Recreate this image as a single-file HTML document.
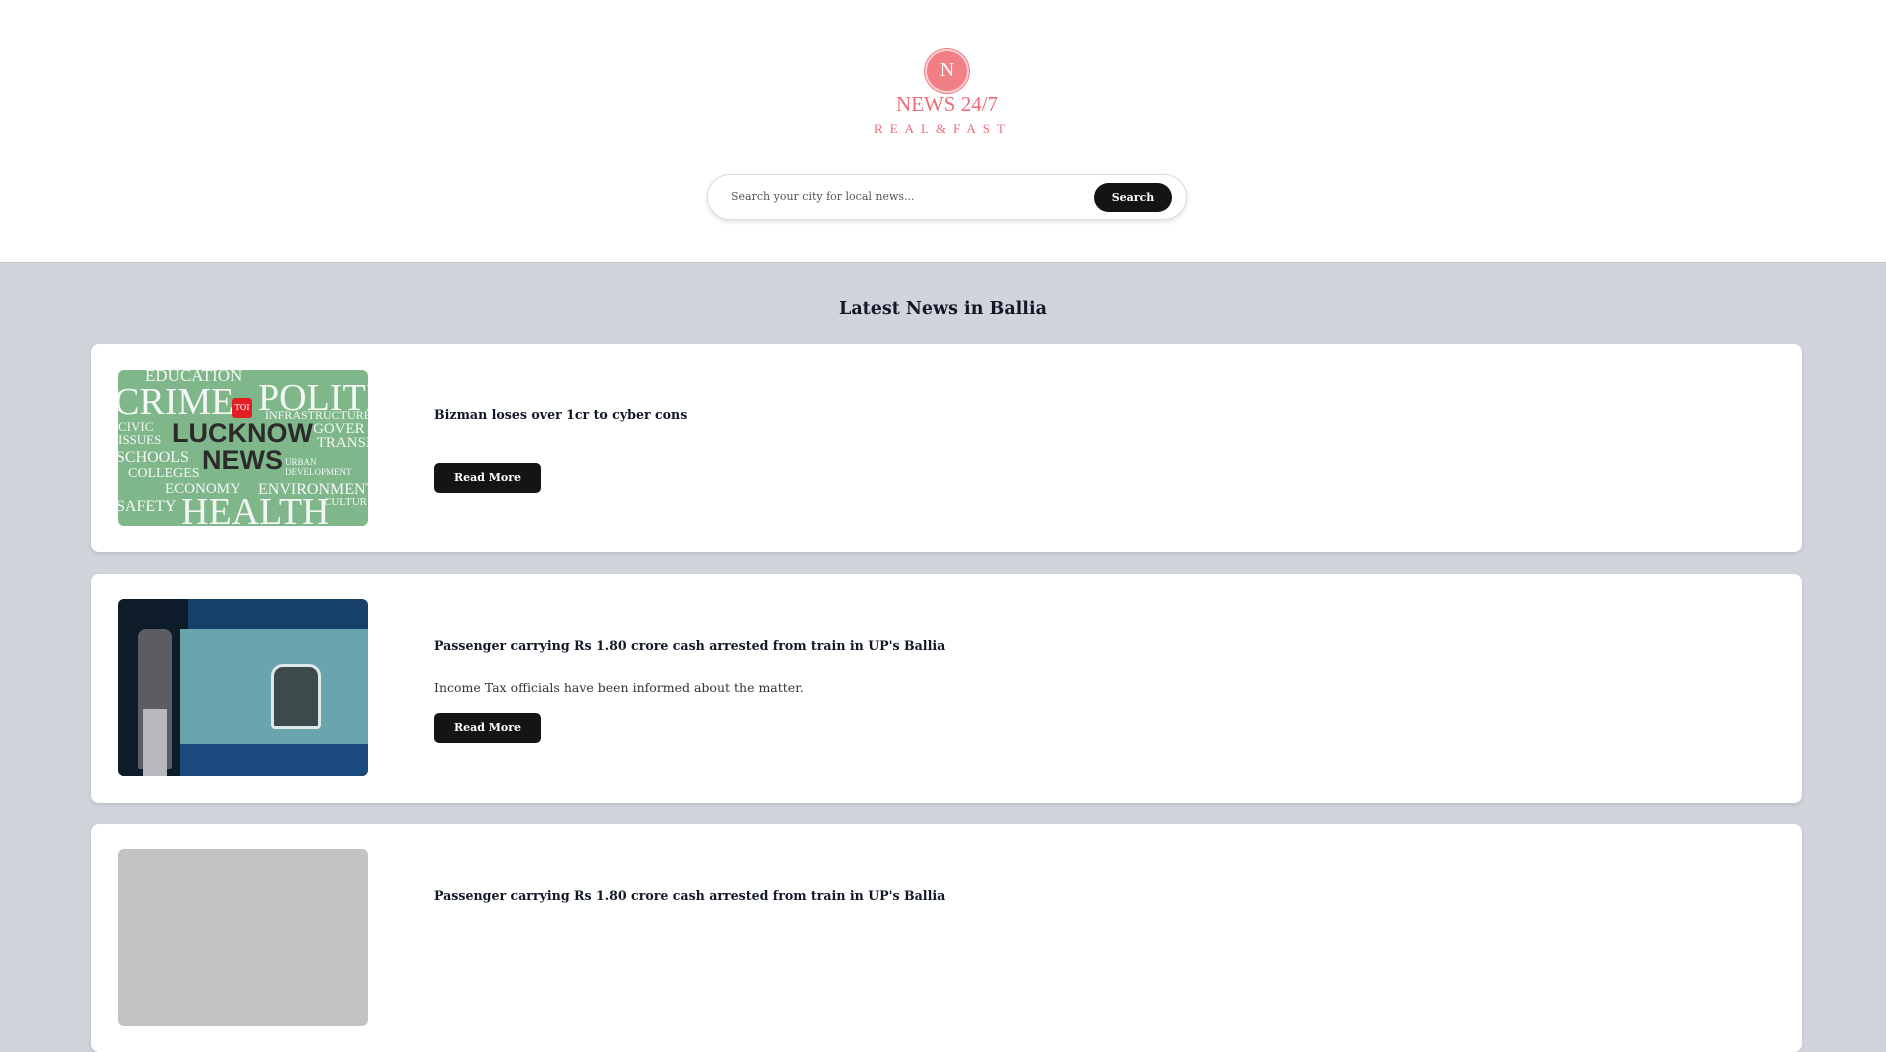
<!DOCTYPE html>
<html><head><meta charset="utf-8"><style>
*{box-sizing:border-box;margin:0;padding:0}
body{width:1886px;height:897px;overflow:hidden;background:#d1d5db;font-family:"DejaVu Serif","Liberation Serif",serif;color:#111827}
header{position:absolute;left:0;top:0;width:1886px;height:263px;background:#fff;border-bottom:1px solid #c4c8ce}
.logo{position:absolute;left:925px;top:49px;width:44px;height:44px;border-radius:50%;background:#f07f86;border:2px solid #fbd0d3;box-shadow:0 0 0 1px #f07f86}
.logo span{position:absolute;left:0;right:0;top:8px;text-align:center;color:#fff;font:20px "Liberation Serif",serif}
.t1{position:absolute;left:880px;width:134px;top:92px;text-align:center;color:#ef6a77;font:21px "Liberation Serif",serif}
.t2{position:absolute;left:860px;width:166px;top:121px;text-align:center;color:#ef6a77;font:13px "Liberation Serif",serif;letter-spacing:7px}
.search{position:absolute;left:707px;top:174px;width:480px;height:46px;border:1px solid #ddd;border-radius:23px;box-shadow:0 2px 5px rgba(0,0,0,.12);background:#fff}
.search .ph{position:absolute;left:23px;top:15px;font-size:11px;color:#555}
.search .btn{position:absolute;left:386px;top:8px;width:78px;height:29px;border-radius:15px;background:#141414;color:#fff;font-size:11px;font-weight:bold;text-align:center;line-height:29px}
h2{position:absolute;left:0;width:1886px;top:299px;text-align:center;font-size:17.5px;font-weight:bold}
.card{position:absolute;left:91px;width:1711px;background:#fff;border-radius:8px;box-shadow:0 2px 4px rgba(0,0,0,.1)}
.img{position:absolute;left:27px;width:250px;border-radius:6px;overflow:hidden}
.title{position:absolute;left:343px;font-size:12.6px;font-weight:bold;white-space:nowrap}
.desc{position:absolute;left:343px;font-size:12.5px;color:#333}
.rm{position:absolute;left:343px;width:107px;height:30px;border-radius:5px;background:#141414;color:#fff;font-size:11px;font-weight:bold;text-align:center;line-height:30px}
.w{position:absolute;color:#f4f8f4;font-family:"Liberation Serif",serif;white-space:nowrap}
.b{position:absolute;color:#2b2b2b;font-family:"Liberation Sans",sans-serif;font-weight:bold;white-space:nowrap}
</style></head><body>
<header>
<div class="logo"><span>N</span></div>
<div class="t1">NEWS 24/7</div>
<div class="t2">REAL&amp;FAST</div>
<div class="search"><div class="ph">Search your city for local news...</div><div class="btn">Search</div></div>
</header>
<h2>Latest News in Ballia</h2>

<div class="card" style="top:344px;height:208px">
 <div class="img" style="top:26px;height:156px;background:#7fb78b">
  <div class="w" style="left:27px;top:-4px;font-size:17px">EDUCATION</div>
  <div class="w" style="left:-4px;top:10px;font-size:38px">CRIME</div>
  <div class="w" style="left:140px;top:6px;font-size:38px">POLITIC</div>
  <div style="position:absolute;left:114px;top:28px;width:20px;height:20px;background:#e31e24;border-radius:3px;color:#fff;font-size:8px;text-align:center;line-height:20px">TOI</div>
  <div class="w" style="left:147px;top:38px;font-size:12px">INFRASTRUCTURE</div>
  <div class="w" style="left:0;top:50px;font-size:13px;line-height:13px">CIVIC<br>ISSUES</div>
  <div class="b" style="left:54px;top:48px;font-size:27px">LUCKNOW</div>
  <div class="w" style="left:195px;top:52px;font-size:15px;line-height:14px">GOVER<br>&nbsp;TRANSI</div>
  <div class="w" style="left:-2px;top:79px;font-size:16px">SCHOOLS</div>
  <div class="b" style="left:84px;top:75px;font-size:27px">NEWS</div>
  <div class="w" style="left:167px;top:87px;font-size:9px;line-height:10px">URBAN<br>DEVELOPMENT</div>
  <div class="w" style="left:10px;top:96px;font-size:14px">COLLEGES</div>
  <div class="w" style="left:47px;top:111px;font-size:15px">ECONOMY</div>
  <div class="w" style="left:140px;top:111px;font-size:16px">ENVIRONMENT</div>
  <div class="w" style="left:-2px;top:128px;font-size:16px">SAFETY</div>
  <div class="w" style="left:63px;top:120px;font-size:38px">HEALTH</div>
  <div class="w" style="left:206px;top:126px;font-size:11px">CULTUR</div>
 </div>
 <div class="title" style="top:63px">Bizman loses over 1cr to cyber cons</div>
 <div class="rm" style="top:119px">Read More</div>
</div>

<div class="card" style="top:574px;height:229px">
 <div class="img" style="top:25px;height:177px;background:#17406a">
  <div style="position:absolute;left:0;top:0;width:70px;height:177px;background:#0e1c2a"></div>
  <div style="position:absolute;left:62px;top:30px;width:188px;height:115px;background:#6aa4ad"></div>
  <div style="position:absolute;left:62px;top:145px;width:188px;height:32px;background:#1a4a7e"></div>
  <div style="position:absolute;left:153px;top:65px;width:50px;height:65px;border-radius:12px 12px 4px 4px;background:#3d4a4a;border:3px solid #dfe8e8"></div>
  <div style="position:absolute;left:20px;top:30px;width:34px;height:140px;background:#5b5d62;border-radius:8px 8px 2px 2px"></div>
  <div style="position:absolute;left:25px;top:110px;width:24px;height:67px;background:#b8b8bc"></div>
 </div>
 <div class="title" style="top:64px">Passenger carrying Rs 1.80 crore cash arrested from train in UP's Ballia</div>
 <div class="desc" style="top:106px">Income Tax officials have been informed about the matter.</div>
 <div class="rm" style="top:139px">Read More</div>
</div>

<div class="card" style="top:824px;height:228px">
 <div class="img" style="top:25px;height:177px;background:#c3c3c3"></div>
 <div class="title" style="top:64px">Passenger carrying Rs 1.80 crore cash arrested from train in UP's Ballia</div>
</div>
</body></html>
